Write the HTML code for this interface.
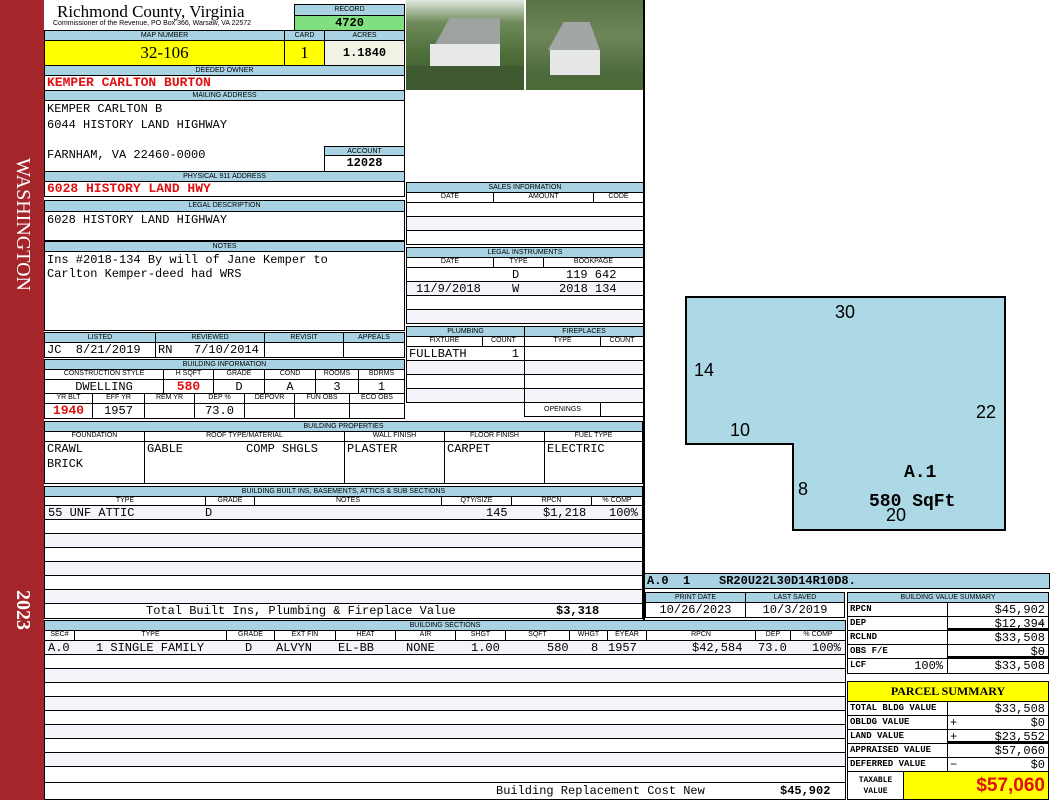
<!DOCTYPE html>
<html><head><meta charset="utf-8"><style>
*{margin:0;padding:0;box-sizing:border-box}
body{width:1050px;height:800px;background:#fff;position:relative;overflow:hidden;font-family:"Liberation Sans",sans-serif}
.a{position:absolute}
.l{position:absolute;background:#a9d3e3;border:1px solid #000;font:7px "Liberation Sans",sans-serif;text-align:center;line-height:9px;color:#000;overflow:hidden;white-space:nowrap}
.c{position:absolute;border:1px solid #000;background:#fff;font:12px "Liberation Mono",monospace;line-height:14px;white-space:nowrap;overflow:hidden;padding-left:2px}
.h{position:absolute;border:1px solid #000;background:#fff;font:7px "Liberation Sans",sans-serif;text-align:center;line-height:8px;white-space:nowrap;overflow:hidden}
.m{font:12px "Liberation Mono",monospace;white-space:nowrap;position:absolute}
.r{color:#e01010;font-weight:bold;font-size:13px}
.ctr{text-align:center;padding:0}
.rt{text-align:right;padding-right:3px}
.alt{background:#f4f4fa}
.s{font:bold 9px "Liberation Mono",monospace;line-height:13px}
</style></head><body>
<!-- sidebar -->
<div class="a" style="left:0;top:0;width:44px;height:800px;background:#a4262b"></div>
<div class="a" style="left:10px;top:158px;width:26px;height:170px;writing-mode:vertical-rl;font:20px 'Liberation Serif',serif;color:#fff;line-height:26px">WASHINGTON</div>
<div class="a" style="left:10px;top:590px;width:26px;height:40px;writing-mode:vertical-rl;font:bold 20px 'Liberation Serif',serif;color:#fff;line-height:26px">2023</div>

<!-- header -->
<div class="a" style="left:57px;top:2px;font:17px 'Liberation Serif',serif">Richmond County, Virginia</div>
<div class="a" style="left:53px;top:20px;font:7px 'Liberation Sans',sans-serif">Commissioner of the Revenue, PO Box 366, Warsaw, VA 22572</div>
<div class="l" style="left:294px;top:4px;width:111px;height:12px">RECORD</div>
<div class="c ctr" style="left:294px;top:15px;width:111px;height:16px;background:#80e080;font-weight:bold">4720</div>
<div class="l" style="left:44px;top:30px;width:241px;height:11px">MAP NUMBER</div>
<div class="l" style="left:284px;top:30px;width:41px;height:11px">CARD</div>
<div class="l" style="left:324px;top:30px;width:81px;height:11px">ACRES</div>
<div class="c ctr" style="left:44px;top:40px;width:241px;height:26px;background:#ffff00;font:17px 'Liberation Serif',serif;line-height:24px">32-106</div>
<div class="c ctr" style="left:284px;top:40px;width:41px;height:26px;background:#ffff00;font:17px 'Liberation Serif',serif;line-height:24px">1</div>
<div class="c ctr" style="left:324px;top:40px;width:81px;height:26px;background:#f2f2e4;font-weight:bold;line-height:24px">1.1840</div>
<div class="l" style="left:44px;top:65px;width:361px;height:11px">DEEDED OWNER</div>
<div class="c r" style="left:44px;top:75px;width:361px;height:16px">KEMPER CARLTON BURTON</div>
<div class="l" style="left:44px;top:90px;width:361px;height:11px">MAILING ADDRESS</div>
<div class="c" style="left:44px;top:100px;width:361px;height:72px"></div>
<div class="m" style="left:47px;top:102px">KEMPER CARLTON B</div>
<div class="m" style="left:47px;top:118px">6044 HISTORY LAND HIGHWAY</div>
<div class="m" style="left:47px;top:148px">FARNHAM, VA 22460-0000</div>
<div class="l" style="left:324px;top:146px;width:81px;height:10px">ACCOUNT</div>
<div class="c ctr" style="left:324px;top:155px;width:81px;height:17px;font-weight:bold">12028</div>
<div class="l" style="left:44px;top:171px;width:361px;height:11px">PHYSICAL 911 ADDRESS</div>
<div class="c r" style="left:44px;top:181px;width:361px;height:16px">6028 HISTORY LAND HWY</div>
<div class="l" style="left:44px;top:200px;width:361px;height:12px">LEGAL DESCRIPTION</div>
<div class="c" style="left:44px;top:211px;width:361px;height:30px;padding-top:1px">6028 HISTORY LAND HIGHWAY</div>
<div class="l" style="left:44px;top:241px;width:361px;height:11px">NOTES</div>
<div class="c" style="left:44px;top:251px;width:361px;height:80px;line-height:14px;padding-top:1px">Ins #2018-134 By will of Jane Kemper to<br>Carlton Kemper-deed had WRS</div>

<!-- listed -->
<div class="l" style="left:44px;top:332px;width:112px;height:11px">LISTED</div>
<div class="l" style="left:155px;top:332px;width:110px;height:11px">REVIEWED</div>
<div class="l" style="left:264px;top:332px;width:80px;height:11px">REVISIT</div>
<div class="l" style="left:343px;top:332px;width:62px;height:11px">APPEALS</div>
<div class="c" style="left:44px;top:342px;width:112px;height:16px">JC &nbsp;8/21/2019</div>
<div class="c" style="left:155px;top:342px;width:110px;height:16px">RN &nbsp;&nbsp;7/10/2014</div>
<div class="c" style="left:264px;top:342px;width:80px;height:16px"></div>
<div class="c" style="left:343px;top:342px;width:62px;height:16px"></div>

<!-- building info -->
<div class="l" style="left:44px;top:359px;width:361px;height:11px">BUILDING INFORMATION</div>
<div class="h" style="left:44px;top:369px;width:120px;height:11px">CONSTRUCTION STYLE</div>
<div class="h" style="left:163px;top:369px;width:51px;height:11px">H SQFT</div>
<div class="h" style="left:213px;top:369px;width:52px;height:11px">GRADE</div>
<div class="h" style="left:264px;top:369px;width:52px;height:11px">COND</div>
<div class="h" style="left:315px;top:369px;width:44px;height:11px">ROOMS</div>
<div class="h" style="left:358px;top:369px;width:47px;height:11px">BDRMS</div>
<div class="c ctr" style="left:44px;top:379px;width:120px;height:15px">DWELLING</div>
<div class="c ctr r" style="left:163px;top:379px;width:51px;height:15px">580</div>
<div class="c ctr" style="left:213px;top:379px;width:52px;height:15px">D</div>
<div class="c ctr" style="left:264px;top:379px;width:52px;height:15px">A</div>
<div class="c ctr" style="left:315px;top:379px;width:44px;height:15px">3</div>
<div class="c ctr" style="left:358px;top:379px;width:47px;height:15px">1</div>
<div class="h" style="left:44px;top:393px;width:49px;height:11px">YR BLT</div>
<div class="h" style="left:92px;top:393px;width:53px;height:11px">EFF YR</div>
<div class="h" style="left:144px;top:393px;width:51px;height:11px">REM YR</div>
<div class="h" style="left:194px;top:393px;width:51px;height:11px">DEP %</div>
<div class="h" style="left:244px;top:393px;width:51px;height:11px">DEPOVR</div>
<div class="h" style="left:294px;top:393px;width:56px;height:11px">FUN OBS</div>
<div class="h" style="left:349px;top:393px;width:56px;height:11px">ECO OBS</div>
<div class="c ctr r" style="left:44px;top:403px;width:49px;height:16px">1940</div>
<div class="c ctr" style="left:92px;top:403px;width:53px;height:16px">1957</div>
<div class="c" style="left:144px;top:403px;width:51px;height:16px"></div>
<div class="c ctr" style="left:194px;top:403px;width:51px;height:16px">73.0</div>
<div class="c" style="left:244px;top:403px;width:51px;height:16px"></div>
<div class="c" style="left:294px;top:403px;width:56px;height:16px"></div>
<div class="c" style="left:349px;top:403px;width:56px;height:16px"></div>

<!-- photos -->
<div class="a" style="left:406px;top:0;width:118px;height:90px;background:linear-gradient(180deg,#dfe8e0 0,#6f8a5a 25%,#4e6e3a 60%,#3d5a2c 100%)"></div>
<div class="a" style="left:428px;top:18px;width:72px;height:26px;background:#9fa3a0;clip-path:polygon(10% 100%,30% 0,100% 0,100% 100%)"></div>
<div class="a" style="left:430px;top:44px;width:70px;height:26px;background:#e8eaea"></div>
<div class="a" style="left:406px;top:66px;width:118px;height:24px;background:#3f5a30"></div>
<div class="a" style="left:526px;top:0;width:118px;height:90px;background:linear-gradient(180deg,#5a7346 0,#6d8658 40%,#3f5e30 100%)"></div>
<div class="a" style="left:548px;top:22px;width:52px;height:28px;background:#a2a6a4;clip-path:polygon(0 100%,30% 0,80% 0,100% 100%)"></div>
<div class="a" style="left:550px;top:50px;width:50px;height:25px;background:#e6e8e8"></div>
<div class="a" style="left:526px;top:78px;width:118px;height:12px;background:#4a6a36"></div>
<div class="a" style="left:643px;top:0;width:2px;height:800px;background:#000"></div>

<!-- sales -->
<div class="l" style="left:406px;top:182px;width:238px;height:11px">SALES INFORMATION</div>
<div class="h" style="left:406px;top:192px;width:88px;height:11px">DATE</div>
<div class="h" style="left:493px;top:192px;width:101px;height:11px">AMOUNT</div>
<div class="h" style="left:593px;top:192px;width:51px;height:11px">CODE</div>
<div class="c" style="left:406px;top:202px;width:238px;height:15px"></div>
<div class="c alt" style="left:406px;top:216px;width:238px;height:15px"></div>
<div class="c" style="left:406px;top:230px;width:238px;height:15px"></div>
<div class="l" style="left:406px;top:247px;width:238px;height:11px">LEGAL INSTRUMENTS</div>
<div class="h" style="left:406px;top:257px;width:88px;height:11px">DATE</div>
<div class="h" style="left:493px;top:257px;width:51px;height:11px">TYPE</div>
<div class="h" style="left:543px;top:257px;width:101px;height:11px">BOOKPAGE</div>
<div class="c" style="left:406px;top:267px;width:238px;height:15px"></div>
<div class="m" style="left:512px;top:268px">D</div><div class="m" style="left:566px;top:268px">119 642</div>
<div class="c alt" style="left:406px;top:281px;width:238px;height:15px"></div>
<div class="m" style="left:416px;top:282px">11/9/2018</div><div class="m" style="left:512px;top:282px">W</div><div class="m" style="left:559px;top:282px">2018 134</div>
<div class="c" style="left:406px;top:295px;width:238px;height:15px"></div>
<div class="c alt" style="left:406px;top:309px;width:238px;height:15px"></div>

<!-- plumbing -->
<div class="l" style="left:406px;top:326px;width:119px;height:11px">PLUMBING</div>
<div class="l" style="left:524px;top:326px;width:120px;height:11px">FIREPLACES</div>
<div class="h" style="left:406px;top:336px;width:77px;height:11px">FIXTURE</div>
<div class="h" style="left:482px;top:336px;width:43px;height:11px">COUNT</div>
<div class="h" style="left:524px;top:336px;width:77px;height:11px">TYPE</div>
<div class="h" style="left:600px;top:336px;width:44px;height:11px">COUNT</div>
<div class="c" style="left:406px;top:346px;width:119px;height:15px">FULLBATH<span style="position:absolute;right:5px">1</span></div>
<div class="c alt" style="left:406px;top:360px;width:119px;height:15px"></div>
<div class="c" style="left:406px;top:374px;width:119px;height:15px"></div>
<div class="c alt" style="left:406px;top:388px;width:119px;height:15px"></div>
<div class="c" style="left:524px;top:346px;width:120px;height:15px"></div>
<div class="c alt" style="left:524px;top:360px;width:120px;height:15px"></div>
<div class="c" style="left:524px;top:374px;width:120px;height:15px"></div>
<div class="c alt" style="left:524px;top:388px;width:120px;height:15px"></div>
<div class="h" style="left:524px;top:402px;width:77px;height:15px;line-height:13px">OPENINGS</div>
<div class="c" style="left:600px;top:402px;width:44px;height:15px"></div>

<!-- building properties -->
<div class="l" style="left:44px;top:421px;width:599px;height:11px">BUILDING PROPERTIES</div>
<div class="h" style="left:44px;top:431px;width:101px;height:11px">FOUNDATION</div>
<div class="h" style="left:144px;top:431px;width:201px;height:11px">ROOF TYPE/MATERIAL</div>
<div class="h" style="left:344px;top:431px;width:101px;height:11px">WALL FINISH</div>
<div class="h" style="left:444px;top:431px;width:101px;height:11px">FLOOR FINISH</div>
<div class="h" style="left:544px;top:431px;width:99px;height:11px">FUEL TYPE</div>
<div class="c" style="left:44px;top:441px;width:101px;height:43px;line-height:15px">CRAWL<br>BRICK</div>
<div class="c" style="left:144px;top:441px;width:201px;height:43px;line-height:15px">GABLE<span style="position:absolute;left:101px">COMP SHGLS</span></div>
<div class="c" style="left:344px;top:441px;width:101px;height:43px;line-height:15px">PLASTER</div>
<div class="c" style="left:444px;top:441px;width:101px;height:43px;line-height:15px">CARPET</div>
<div class="c" style="left:544px;top:441px;width:99px;height:43px;line-height:15px">ELECTRIC</div>

<!-- built ins -->
<div class="l" style="left:44px;top:486px;width:599px;height:11px">BUILDING BUILT INS, BASEMENTS, ATTICS &amp; SUB SECTIONS</div>
<div class="h" style="left:44px;top:496px;width:162px;height:10px">TYPE</div>
<div class="h" style="left:205px;top:496px;width:50px;height:10px">GRADE</div>
<div class="h" style="left:254px;top:496px;width:188px;height:10px">NOTES</div>
<div class="h" style="left:441px;top:496px;width:71px;height:10px">QTY/SIZE</div>
<div class="h" style="left:511px;top:496px;width:81px;height:10px">RPCN</div>
<div class="h" style="left:591px;top:496px;width:52px;height:10px">% COMP</div>
<div class="c alt" style="left:44px;top:505px;width:599px;height:15px"></div>
<div class="m" style="left:48px;top:506px">55 UNF ATTIC</div><div class="m" style="left:205px;top:506px">D</div>
<div class="m" style="left:486px;top:506px">145</div><div class="m" style="left:543px;top:506px">$1,218</div><div class="m" style="left:609px;top:506px">100%</div>
<div class="c" style="left:44px;top:519px;width:599px;height:15px"></div>
<div class="c alt" style="left:44px;top:533px;width:599px;height:15px"></div>
<div class="c" style="left:44px;top:547px;width:599px;height:15px"></div>
<div class="c alt" style="left:44px;top:561px;width:599px;height:15px"></div>
<div class="c" style="left:44px;top:575px;width:599px;height:15px"></div>
<div class="c alt" style="left:44px;top:589px;width:599px;height:15px"></div>
<div class="c" style="left:44px;top:603px;width:599px;height:16px"></div>
<div class="m" style="left:146px;top:604px">Total Built Ins, Plumbing &amp; Fireplace Value</div>
<div class="m" style="left:556px;top:604px;font-weight:bold">$3,318</div>

<!-- building sections -->
<div class="l" style="left:44px;top:620px;width:802px;height:11px">BUILDING SECTIONS</div>
<div class="h" style="left:44px;top:630px;width:31px;height:11px">SEC#</div>
<div class="h" style="left:74px;top:630px;width:153px;height:11px">TYPE</div>
<div class="h" style="left:226px;top:630px;width:49px;height:11px">GRADE</div>
<div class="h" style="left:274px;top:630px;width:62px;height:11px">EXT FIN</div>
<div class="h" style="left:335px;top:630px;width:61px;height:11px">HEAT</div>
<div class="h" style="left:395px;top:630px;width:61px;height:11px">AIR</div>
<div class="h" style="left:455px;top:630px;width:51px;height:11px">SHGT</div>
<div class="h" style="left:505px;top:630px;width:65px;height:11px">SQFT</div>
<div class="h" style="left:569px;top:630px;width:39px;height:11px">WHGT</div>
<div class="h" style="left:607px;top:630px;width:40px;height:11px">EYEAR</div>
<div class="h" style="left:646px;top:630px;width:110px;height:11px">RPCN</div>
<div class="h" style="left:755px;top:630px;width:36px;height:11px">DEP</div>
<div class="h" style="left:790px;top:630px;width:56px;height:11px">% COMP</div>
<div class="c alt" style="left:44px;top:640px;width:802px;height:15px"></div>
<div class="m" style="left:48px;top:641px">A.0</div><div class="m" style="left:96px;top:641px">1 SINGLE FAMILY</div>
<div class="m" style="left:245px;top:641px">D</div><div class="m" style="left:276px;top:641px">ALVYN</div>
<div class="m" style="left:338px;top:641px">EL-BB</div><div class="m" style="left:406px;top:641px">NONE</div>
<div class="m" style="left:471px;top:641px">1.00</div><div class="m" style="left:547px;top:641px">580</div>
<div class="m" style="left:591px;top:641px">8</div><div class="m" style="left:608px;top:641px">1957</div>
<div class="m" style="left:692px;top:641px">$42,584</div><div class="m" style="left:758px;top:641px">73.0</div>
<div class="m" style="left:812px;top:641px">100%</div>
<div class="c" style="left:44px;top:654px;width:802px;height:15px"></div>
<div class="c alt" style="left:44px;top:668px;width:802px;height:15px"></div>
<div class="c" style="left:44px;top:682px;width:802px;height:15px"></div>
<div class="c alt" style="left:44px;top:696px;width:802px;height:15px"></div>
<div class="c" style="left:44px;top:710px;width:802px;height:15px"></div>
<div class="c alt" style="left:44px;top:724px;width:802px;height:15px"></div>
<div class="c" style="left:44px;top:738px;width:802px;height:15px"></div>
<div class="c alt" style="left:44px;top:752px;width:802px;height:15px"></div>
<div class="c" style="left:44px;top:766px;width:802px;height:17px"></div>
<div class="c" style="left:44px;top:782px;width:802px;height:18px"></div>
<div class="m" style="left:496px;top:784px">Building Replacement Cost New</div>
<div class="m" style="left:780px;top:784px;font-weight:bold">$45,902</div>

<!-- sketch -->
<svg class="a" style="left:645px;top:0" width="405" height="573">
<polygon points="41,297 360,297 360,530 148,530 148,444 41,444" fill="#add8e6" stroke="#000" stroke-width="2"/>
<g font-family="Liberation Sans, sans-serif" font-size="18">
<text x="190" y="318">30</text><text x="49" y="376">14</text><text x="331" y="418">22</text>
<text x="85" y="436">10</text><text x="153" y="495">8</text><text x="241" y="521">20</text>
</g>
<g font-family="Liberation Mono, monospace" font-size="18" font-weight="bold">
<text x="259" y="477">A.1</text><text x="224" y="506">580 SqFt</text>
</g>
</svg>
<div class="c" style="left:644px;top:573px;width:406px;height:16px;background:#a9d3e3;font-weight:bold">A.0 &nbsp;1 &nbsp;&nbsp;&nbsp;SR20U22L30D14R10D8.</div>

<!-- print date -->
<div class="l" style="left:645px;top:592px;width:101px;height:11px">PRINT DATE</div>
<div class="l" style="left:745px;top:592px;width:100px;height:11px">LAST SAVED</div>
<div class="c ctr" style="left:645px;top:602px;width:101px;height:16px">10/26/2023</div>
<div class="c ctr" style="left:745px;top:602px;width:100px;height:16px">10/3/2019</div>

<!-- value summary -->
<div class="l" style="left:847px;top:592px;width:202px;height:11px">BUILDING VALUE SUMMARY</div>
<div class="c s" style="left:847px;top:602px;width:101px;height:15px">RPCN</div><div class="c rt" style="left:947px;top:602px;width:102px;height:15px">$45,902</div>
<div class="c s" style="left:847px;top:616px;width:101px;height:15px">DEP</div><div class="c rt" style="left:947px;top:616px;width:102px;height:15px;border-bottom-width:3px">&minus;<span style="position:absolute;right:3px">$12,394</span></div>
<div class="c s" style="left:847px;top:630px;width:101px;height:15px">RCLND</div><div class="c rt" style="left:947px;top:630px;width:102px;height:15px">$33,508</div>
<div class="c s" style="left:847px;top:644px;width:101px;height:15px">OBS F/E</div><div class="c rt" style="left:947px;top:644px;width:102px;height:15px;border-bottom-width:3px">&minus;<span style="position:absolute;right:3px">$0</span></div>
<div class="c s" style="left:847px;top:658px;width:101px;height:16px">LCF<span style="position:absolute;right:4px;font:12px 'Liberation Mono',monospace">100%</span></div><div class="c rt" style="left:947px;top:658px;width:102px;height:16px">$33,508</div>

<!-- parcel summary -->
<div class="c ctr" style="left:847px;top:681px;width:202px;height:21px;background:#ffff00;font:bold 12px 'Liberation Serif',serif;line-height:19px">PARCEL SUMMARY</div>
<div class="c s" style="left:847px;top:701px;width:101px;height:15px">TOTAL BLDG VALUE</div><div class="c rt" style="left:947px;top:701px;width:102px;height:15px">$33,508</div>
<div class="c s" style="left:847px;top:715px;width:101px;height:15px">OBLDG VALUE</div><div class="c" style="left:947px;top:715px;width:102px;height:15px">+<span style="position:absolute;right:3px">$0</span></div>
<div class="c s" style="left:847px;top:729px;width:101px;height:15px">LAND VALUE</div><div class="c" style="left:947px;top:729px;width:102px;height:15px;border-bottom-width:3px">+<span style="position:absolute;right:3px">$23,552</span></div>
<div class="c s" style="left:847px;top:743px;width:101px;height:15px">APPRAISED VALUE</div><div class="c rt" style="left:947px;top:743px;width:102px;height:15px">$57,060</div>
<div class="c s" style="left:847px;top:757px;width:101px;height:15px">DEFERRED VALUE</div><div class="c" style="left:947px;top:757px;width:102px;height:15px">&minus;<span style="position:absolute;right:3px">$0</span></div>
<div class="c ctr" style="left:847px;top:771px;width:57px;height:29px;font:bold 8px 'Liberation Mono',monospace;line-height:11px;padding-top:3px">TAXABLE<br>VALUE</div>
<div class="c rt" style="left:903px;top:771px;width:146px;height:29px;background:#ffff00;color:#e01010;font:bold 19px 'Liberation Sans',sans-serif;line-height:27px">$57,060</div>
</body></html>
